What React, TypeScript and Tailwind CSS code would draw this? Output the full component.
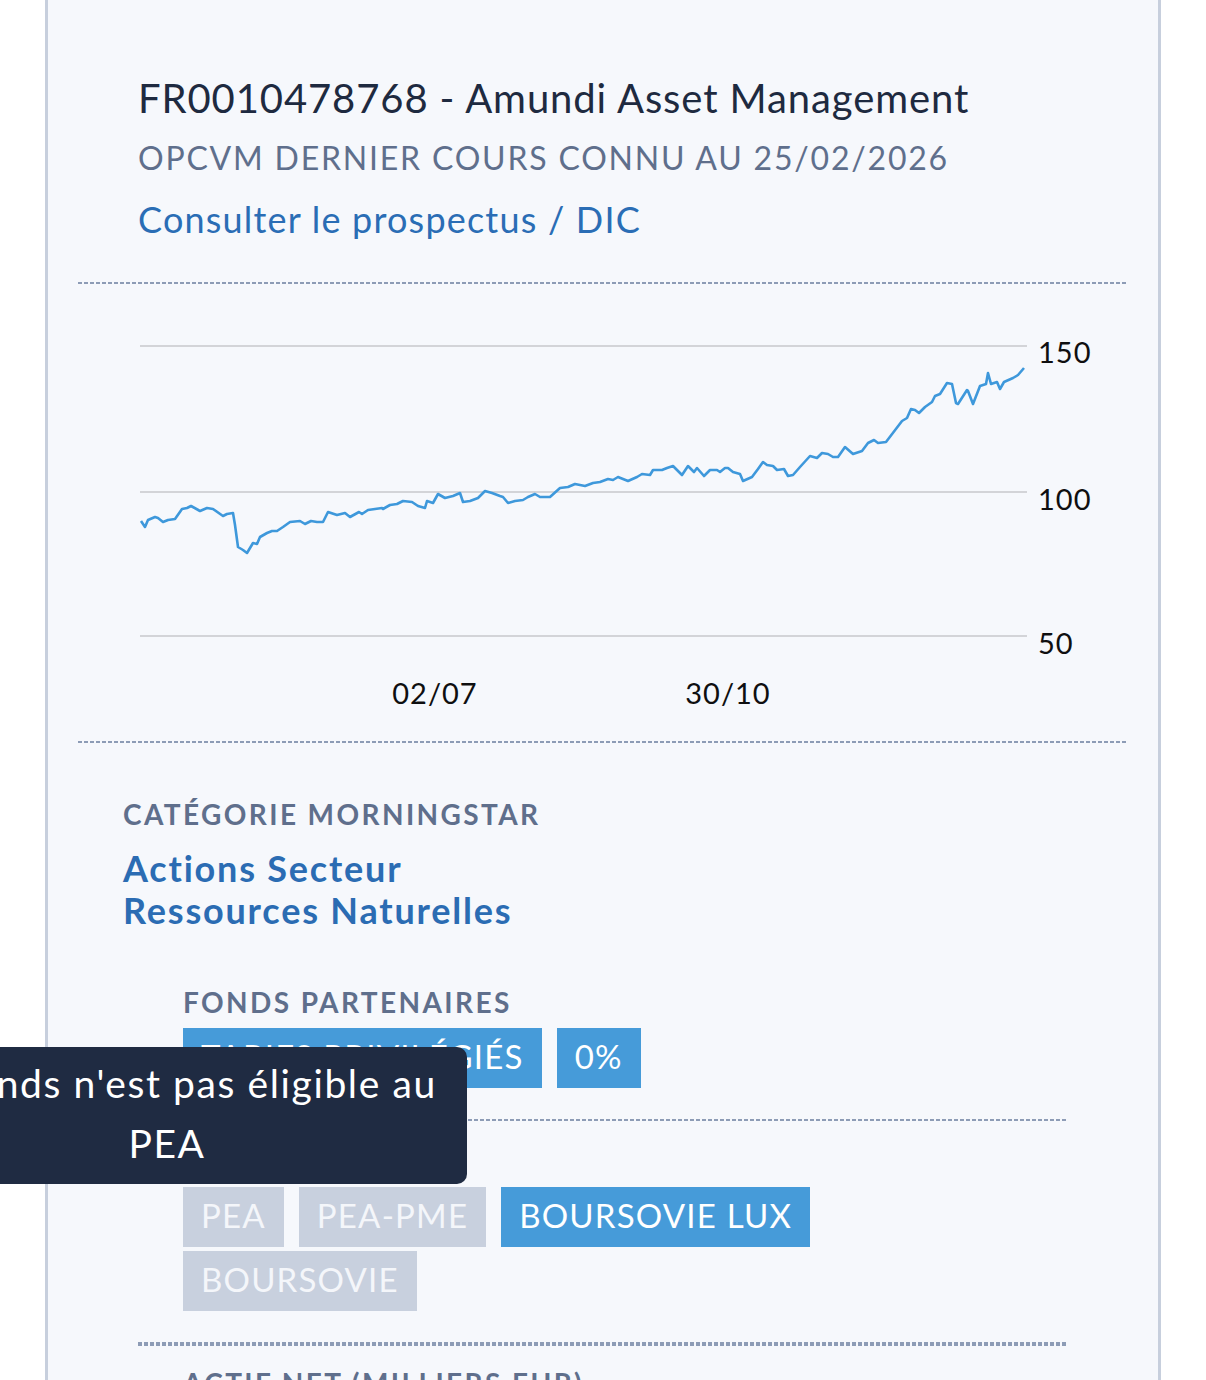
import React from 'react';

const font = { fontFamily: 'Lato, "Noto Sans", sans-serif' };

const linePts: [number, number][] = [
  [141, 521], [145, 527], [148, 520], [155, 517], [158, 518], [163, 522], [168, 520], [175, 519],
  [182, 509], [187, 508], [191, 506], [200, 511], [207, 508], [213, 509], [223, 516], [227, 514],
  [233, 513], [235, 525], [238, 547], [243, 550], [247, 553], [253, 543], [257, 544], [260, 537],
  [267, 533], [272, 531], [277, 531], [283, 527], [290, 522], [300, 521], [305, 524], [311, 521],
  [317, 522], [323, 522], [328, 512], [337, 515], [345, 513], [350, 517], [359, 512], [362, 514],
  [368, 510], [382, 508], [383, 509], [390, 505], [397, 504], [403, 501], [412, 502], [418, 506],
  [425, 508], [427, 501], [433, 503], [438, 494], [445, 498], [453, 496], [460, 493], [463, 502],
  [470, 501], [478, 498], [485, 491], [492, 493], [500, 496], [503, 497], [508, 503], [515, 501],
  [523, 500], [528, 497], [535, 494], [540, 497], [550, 497], [560, 488], [568, 487], [575, 484],
  [585, 486], [593, 483], [600, 482], [608, 479], [613, 480], [618, 477], [628, 481], [637, 477],
  [642, 474], [650, 475], [653, 470], [662, 470], [667, 468], [673, 466], [682, 475], [688, 466],
  [694, 472], [697, 468], [704, 476], [710, 470], [717, 470], [720, 472], [725, 468], [728, 468],
  [733, 472], [740, 474], [743, 481], [752, 477], [758, 469], [763, 462], [767, 465], [773, 466],
  [777, 470], [784, 469], [788, 476], [793, 475], [800, 467], [810, 456], [817, 458], [822, 453],
  [828, 454], [833, 457], [838, 457], [845, 447], [853, 454], [862, 451], [868, 443], [874, 440],
  [878, 443], [886, 442], [902, 421], [907, 418], [911, 409], [915, 410], [919, 413], [925, 407],
  [932, 402], [935, 396], [940, 394], [947, 383], [952, 384], [956, 403], [958, 404], [967, 390],
  [968, 391], [973, 404], [980, 386], [986, 384], [988, 373], [991, 384], [997, 382], [1000, 389],
  [1004, 382], [1013, 378], [1018, 375], [1024, 368],
];

const Dotted = ({ className }: { className: string }) => (
  <div
    className={`bg-[repeating-linear-gradient(90deg,#8d9cb6_0px,#8d9cb6_4px,transparent_4px,transparent_6px)] ${className}`}
  />
);

const Tag = ({ label, active }: { label: string; active?: boolean }) => (
  <span
    className={`flex h-[60px] items-center px-[18px] pb-[3px] text-[33px] uppercase leading-none tracking-[1.2px] ${
      active ? 'bg-[#469bd9] text-white' : 'bg-[#c8d0de] text-[#f4f6fa]'
    }`}
  >
    {label}
  </span>
);

const SectionLabel = ({ children }: { children: React.ReactNode }) => (
  <p className="text-[28px] font-bold uppercase leading-[34px] tracking-[2.4px] text-[#5f6f8c]">{children}</p>
);

const Chart = () => (
  <svg width={1050} height={457} viewBox="78 284 1050 457" className="ml-[30px] block">
    {[346, 492, 636].map((y) => (
      <line key={y} x1={140} x2={1027} y1={y} y2={y} stroke="#d3d4d8" strokeWidth={2} />
    ))}
    <polyline
      points={linePts.map((p) => p.join(',')).join(' ')}
      fill="none"
      stroke="#3e98db"
      strokeWidth={2.6}
      strokeLinejoin="round"
    />
    <g fill="#0f0f10" fontSize={29} letterSpacing={1} fontFamily='Lato, "Noto Sans", sans-serif'>
      <text x={1038} y={363}>150</text>
      <text x={1038} y={510}>100</text>
      <text x={1038} y={654}>50</text>
      <text x={435} y={704} textAnchor="middle">02/07</text>
      <text x={728} y={704} textAnchor="middle">30/10</text>
    </g>
  </svg>
);

export default function App() {
  return (
    <div className="relative min-h-screen overflow-hidden bg-white" style={font}>
      <div className="ml-[45px] h-[1380px] w-[1116px] overflow-hidden border-x-[3px] border-[#c7cfdd] bg-[#f6f8fc]">
        <div className="pl-[90px] pt-[74px]">
          <h1 className="text-[40px] leading-[48px] tracking-[0.9px] text-[#1e2a40]">
            FR0010478768 - Amundi Asset Management
          </h1>
          <p className="mt-[16px] text-[32px] uppercase leading-[40px] tracking-[1.8px] text-[#5f6f8c]">
            OPCVM dernier cours connu au 25/02/2026
          </p>
          <a className="mt-[19px] block text-[36px] leading-[44px] tracking-[1.2px] text-[#2a6db5]">
            Consulter le prospectus / DIC
          </a>
        </div>

        <Dotted className="mx-[30px] mt-[41px] h-[2px]" />
        <Chart />
        <Dotted className="mx-[30px] h-[2px]" />

        <div className="pl-[75px] pt-[54px]">
          <SectionLabel>Catégorie Morningstar</SectionLabel>
          <p className="mt-[16px] text-[36px] font-bold leading-[42px] tracking-[1.8px] text-[#2b6cb3]">
            Actions Secteur
            <br />
            Ressources Naturelles
          </p>
        </div>

        <div className="pl-[135px] pt-[54px]">
          <SectionLabel>Fonds partenaires</SectionLabel>
          <div className="mt-[9px] flex w-[700px] flex-wrap gap-x-[15px] gap-y-[4px]">
            <Tag label="Tarifs privilégiés" active />
            <Tag label="0%" active />
          </div>
        </div>

        <Dotted className="ml-[90px] mt-[31px] h-[2px] w-[930px]" />

        <div className="pl-[135px] pt-[22px]">
          <SectionLabel>Éligibilité</SectionLabel>
          <div className="mt-[10px] flex w-[700px] flex-wrap gap-x-[15px] gap-y-[4px]">
            <Tag label="PEA" />
            <Tag label="PEA-PME" />
            <Tag label="Boursovie Lux" active />
            <Tag label="Boursovie" />
          </div>
        </div>

        <Dotted className="ml-[90px] mt-[31px] h-[4px] w-[930px]" />

        <div className="pl-[135px] pt-[20px]">
          <SectionLabel>Actif net (milliers EUR)</SectionLabel>
        </div>
      </div>

      <div className="absolute left-[-133px] top-[1047px] h-[137px] w-[600px] rounded-[10px] bg-[#1f2b42] pt-[6px] text-center text-[39px] leading-[60px] tracking-[1.6px] text-white">
        Ce fonds n'est pas éligible au
        <br />
        PEA
      </div>
    </div>
  );
}
